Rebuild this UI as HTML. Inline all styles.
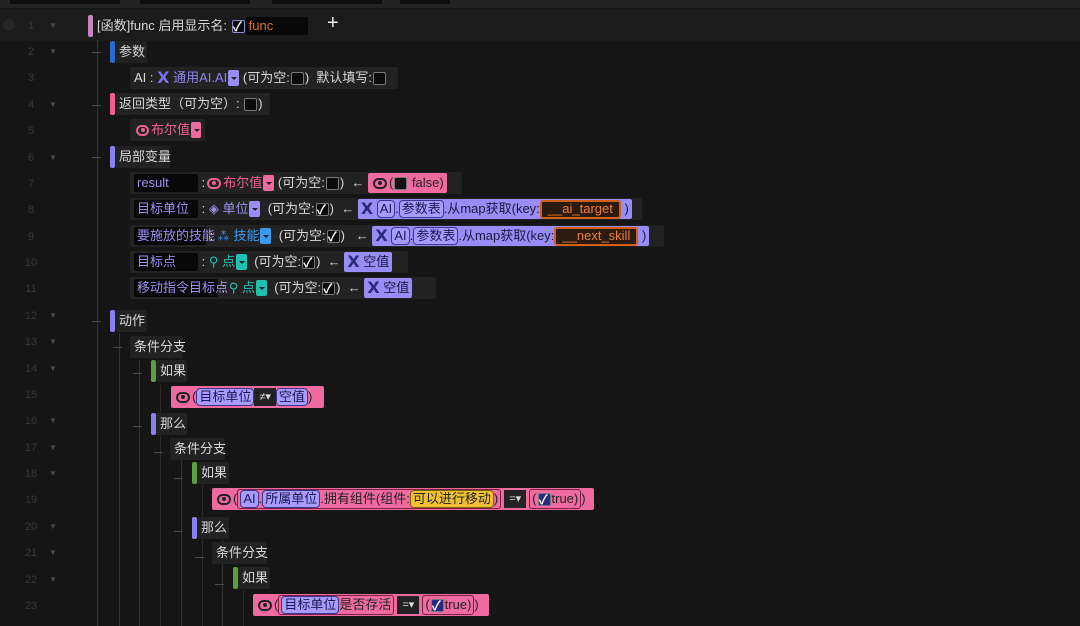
<!DOCTYPE html>
<html><head><meta charset="utf-8"><style>
*{margin:0;padding:0;box-sizing:border-box}
body{width:1080px;height:626px;background:#151515;overflow:hidden;position:relative;font-family:"Liberation Sans","Noto Sans CJK SC",sans-serif;font-size:13px;color:#d8d8d8}
.top{position:absolute;left:0;top:0;width:1080px;height:8px;background:#222}
.tab{position:absolute;top:0;height:4px;background:#0e0e0e}
.r1{position:absolute;left:0;top:9px;width:1080px;height:32px;background:#1b1b1b}
.ln{position:absolute;left:14px;width:34px;text-align:center;color:#363636;font-size:11px;line-height:14px}
.ar{position:absolute;left:49px;color:#4a4a4a;font-size:8px;line-height:14px}
.vl{position:absolute;width:1px;background:#333}
.hd{position:absolute;height:1px;width:9px;background:#4a4a4a}
.b{position:absolute;height:22px;line-height:22px;display:flex;align-items:center;background:#222;border-radius:2px;padding:0 4px;white-space:nowrap}
.bar{position:absolute;width:5px;height:22px;border-radius:2px}
.cb{display:inline-block;width:13px;height:13px;border:1.5px solid #777;background:#0b0b0b;border-radius:2px;margin:0 1px;position:relative;vertical-align:middle}
.cb.on::after{content:"✓";position:absolute;left:0;top:-5px;font-size:13px;color:#fff;font-weight:bold}
.inp{background:#080808;height:18px;display:inline-flex;align-items:center;padding:0 3px;border-radius:2px}
.pk{color:#f06090}
.dd{display:inline-block;width:11px;height:16px;border-radius:2px;position:relative;margin-left:1px}
.dd::after{content:"";position:absolute;left:3px;top:7px;border-left:3px solid transparent;border-right:3px solid transparent;border-top:3px solid #222}
.pkb{background:#ef6a9f;color:#222}
.pub{background:#9a8cf5;color:#1a1a40}
.pill{border:1.5px solid #3a3590;border-radius:4px;padding:0 2px;height:18px;display:inline-flex;align-items:center;background:#a79bff;color:#1a1a50}
.org{border:2px solid #d06018;background:#2a1a10;color:#f08030;border-radius:3px;padding:0 6px;height:19px;display:inline-flex;align-items:center}
.X{font-weight:bold;font-size:16px;color:#2a2a7a;font-family:"DejaVu Sans",sans-serif}
.eye{display:inline-block;width:14px;height:11px;border:2px solid #222;border-radius:6px;position:relative;margin:0 2px}
.eye::after{content:"";position:absolute;left:3px;top:1.5px;width:4px;height:4px;background:#222;border-radius:50%}
.eyep{border-color:#f06090}.eyep::after{background:#f06090}
.op{background:#222;color:#ddd;height:18px;display:inline-flex;align-items:center;padding:0 5px;font-size:11px}
</style></head><body>
<div class="top"></div>
<div class="tab" style="left:10px;width:110px"></div>
<div class="tab" style="left:140px;width:110px"></div>
<div class="tab" style="left:272px;width:110px"></div>
<div class="tab" style="left:400px;width:50px"></div>
<div class="r1"></div>
<div style="position:absolute;left:3px;top:19px;width:12px;height:12px;border-radius:50%;background:#262626"></div>

<div class="ln" style="top:19px">1</div><div class="ar" style="top:19px">▼</div>
<div class="ln" style="top:45px">2</div><div class="ar" style="top:45px">▼</div>
<div class="ln" style="top:71px">3</div>
<div class="ln" style="top:98px">4</div><div class="ar" style="top:98px">▼</div>
<div class="ln" style="top:124px">5</div>
<div class="ln" style="top:151px">6</div><div class="ar" style="top:151px">▼</div>
<div class="ln" style="top:177px">7</div>
<div class="ln" style="top:203px">8</div>
<div class="ln" style="top:230px">9</div>
<div class="ln" style="top:256px">10</div>
<div class="ln" style="top:282px">11</div>
<div class="ln" style="top:309px">12</div><div class="ar" style="top:309px">▼</div>
<div class="ln" style="top:335px">13</div><div class="ar" style="top:335px">▼</div>
<div class="ln" style="top:362px">14</div><div class="ar" style="top:362px">▼</div>
<div class="ln" style="top:388px">15</div>
<div class="ln" style="top:414px">16</div><div class="ar" style="top:414px">▼</div>
<div class="ln" style="top:441px">17</div><div class="ar" style="top:441px">▼</div>
<div class="ln" style="top:467px">18</div><div class="ar" style="top:467px">▼</div>
<div class="ln" style="top:493px">19</div>
<div class="ln" style="top:520px">20</div><div class="ar" style="top:520px">▼</div>
<div class="ln" style="top:546px">21</div><div class="ar" style="top:546px">▼</div>
<div class="ln" style="top:573px">22</div><div class="ar" style="top:573px">▼</div>
<div class="ln" style="top:599px">23</div>

<div class="vl" style="left:97px;top:40px;height:586px"></div>
<div class="vl" style="left:119px;top:333px;height:293px"></div>
<div class="vl" style="left:139px;top:360px;height:266px"></div>
<div class="vl" style="left:160px;top:385px;height:241px;background:#2a2a2a"></div>
<div class="vl" style="left:181px;top:457px;height:169px"></div>
<div class="vl" style="left:202px;top:485px;height:141px;background:#2a2a2a"></div>
<div class="vl" style="left:222px;top:540px;height:86px"></div>
<div class="vl" style="left:243px;top:590px;height:36px;background:#2a2a2a"></div>
<div class="hd" style="left:92px;top:52px"></div>
<div class="hd" style="left:92px;top:105px"></div>
<div class="hd" style="left:92px;top:157px"></div>
<div class="hd" style="left:92px;top:321px"></div>
<div class="hd" style="left:113px;top:347px"></div>
<div class="hd" style="left:133px;top:373px"></div>
<div class="hd" style="left:133px;top:426px"></div>
<div class="hd" style="left:154px;top:452px"></div>
<div class="hd" style="left:174px;top:478px"></div>
<div class="hd" style="left:174px;top:531px"></div>
<div class="hd" style="left:195px;top:557px"></div>
<div class="hd" style="left:215px;top:584px"></div>

<div class="bar" style="left:88px;top:15px;background:#c586c0"></div>
<div class="b" style="left:93px;top:15px;background:none">[函数]func 启用显示名:&nbsp;<span class="cb on" style="border-color:#8a8ad0"></span><span class="inp" style="width:62px;color:#e07020">func</span></div>
<div style="position:absolute;left:327px;top:12px;font-size:20px;color:#eee">+</div>

<div class="bar" style="left:110px;top:41px;background:#2a6ad0"></div>
<div class="b" style="left:115px;top:41px;width:32px">参数</div>
<div class="b" style="left:130px;top:67px;width:268px">AI :&nbsp;<span class="X" style="color:#7a70e8">X</span>&nbsp;<span style="color:#8e84f0">通用AI.AI</span><span class="dd pub"></span>&nbsp;(可为空:<span class="cb"></span>)&nbsp;&nbsp;默认填写:<span class="cb"></span></div>
<div class="bar" style="left:110px;top:93px;background:#f0608f"></div>
<div class="b" style="left:115px;top:93px;width:155px">返回类型（可为空）:&nbsp;<span class="cb"></span>)</div>
<div class="b" style="left:130px;top:119px;width:75px"><span class="eye eyep"></span><span class="pk">布尔值</span><span class="dd pkb"></span></div>
<div class="bar" style="left:110px;top:146px;background:#8a80f0"></div>
<div class="b" style="left:115px;top:146px;width:55px">局部变量</div>
<div class="b" style="left:130px;top:172px;width:332px"><span class="inp" style="width:64px;color:#9a90f0">result</span>&nbsp;:<span class="eye eyep"></span><span class="pk">布尔值</span><span class="dd pkb"></span>&nbsp;(可为空:<span class="cb"></span>)&nbsp;&nbsp;←&nbsp;<span style="background:#ef6a9f;height:20px;display:inline-flex;align-items:center;padding:0 3px;color:#222;border-radius:2px"><span class="eye"></span>(<span class="cb" style="background:#111"></span>&nbsp;false)</span></div>
<div class="b" style="left:130px;top:198px;width:512px"><span class="inp" style="width:64px;color:#9a90f0">目标单位</span>&nbsp;:&nbsp;<span style="color:#9a90f0">◈ 单位</span><span class="dd pub"></span>&nbsp;&nbsp;(可为空:<span class="cb on"></span>)&nbsp;&nbsp;←&nbsp;<span style="background:#9a8cf5;height:20px;display:inline-flex;align-items:center;padding:0 3px;color:#1a1a40;border-radius:2px"><span class="X">X</span>&nbsp;<span class="pill">AI</span>.<span class="pill">参数表</span>.从map获取(key:<span class="org">__ai_target</span>&nbsp;)</span></div>
<div class="b" style="left:130px;top:225px;width:534px"><span class="inp" style="width:72px;color:#9a90f0">要施放的技能</span>&nbsp;:&nbsp;<span style="color:#3a9af0">⁂ 技能</span><span class="dd" style="background:#3a9af0"></span>&nbsp;&nbsp;(可为空:<span class="cb on"></span>)&nbsp;&nbsp;&nbsp;←&nbsp;<span style="background:#9a8cf5;height:20px;display:inline-flex;align-items:center;padding:0 3px;color:#1a1a40;border-radius:2px"><span class="X">X</span>&nbsp;<span class="pill">AI</span>.<span class="pill">参数表</span>.从map获取(key:<span class="org">__next_skill</span>&nbsp;)</span></div>
<div class="b" style="left:130px;top:251px;width:278px"><span class="inp" style="width:64px;color:#9a90f0">目标点</span>&nbsp;:&nbsp;<span style="color:#20c0b0">⚲ 点</span><span class="dd" style="background:#20c0b0"></span>&nbsp;&nbsp;(可为空:<span class="cb on"></span>)&nbsp;&nbsp;←&nbsp;<span style="background:#9a8cf5;height:20px;display:inline-flex;align-items:center;padding:0 3px;color:#1a1a40;border-radius:2px"><span class="X">X</span>&nbsp;空值</span></div>
<div class="b" style="left:130px;top:277px;width:306px"><span class="inp" style="width:84px;color:#9a90f0">移动指令目标点</span>&nbsp;:&nbsp;<span style="color:#20c0b0">⚲ 点</span><span class="dd" style="background:#20c0b0"></span>&nbsp;&nbsp;(可为空:<span class="cb on"></span>)&nbsp;&nbsp;←&nbsp;<span style="background:#9a8cf5;height:20px;display:inline-flex;align-items:center;padding:0 3px;color:#1a1a40;border-radius:2px"><span class="X">X</span>&nbsp;空值</span></div>
<div class="bar" style="left:110px;top:310px;background:#8a80f0"></div>
<div class="b" style="left:115px;top:310px;width:32px">动作</div>
<div class="b" style="left:130px;top:336px;width:53px">条件分支</div>
<div class="bar" style="left:151px;top:360px;background:#5aa040"></div>
<div class="b" style="left:156px;top:360px;width:31px">如果</div>
<div class="b" style="left:171px;top:386px;width:153px;background:#ef6a9f;color:#222;padding:0 3px"><span class="eye"></span>(<span class="pill">目标单位</span><span class="op">≠▾</span><span class="pill">空值</span>)</div>
<div class="bar" style="left:151px;top:413px;background:#8a80f0"></div>
<div class="b" style="left:156px;top:413px;width:31px">那么</div>
<div class="b" style="left:170px;top:438px;width:55px">条件分支</div>
<div class="bar" style="left:192px;top:462px;background:#5aa040"></div>
<div class="b" style="left:197px;top:462px;width:32px">如果</div>
<div class="b" style="left:212px;top:488px;width:382px;background:#ef6a9f;color:#222;padding:0 3px"><span class="eye"></span>(<span style="border:1.5px solid #7a2040;border-radius:3px;height:20px;display:inline-flex;align-items:center;padding:0 2px"><span class="pill">AI</span>.<span class="pill">所属单位</span>.拥有组件(组件:<span class="pill" style="background:#f0c030;border-color:#806010;color:#222">可以进行移动</span>)</span><span class="op" style="margin:0 3px">=▾</span><span style="border:1.5px solid #7a2040;border-radius:3px;height:20px;display:inline-flex;align-items:center;padding:0 2px">(<span class="cb on" style="background:#2a2a80"></span>true)</span>)</div>
<div class="bar" style="left:192px;top:517px;background:#8a80f0"></div>
<div class="b" style="left:197px;top:517px;width:32px">那么</div>
<div class="b" style="left:212px;top:542px;width:55px">条件分支</div>
<div class="bar" style="left:233px;top:567px;background:#5aa040"></div>
<div class="b" style="left:238px;top:567px;width:32px">如果</div>
<div class="b" style="left:253px;top:594px;width:236px;background:#ef6a9f;color:#222;padding:0 3px"><span class="eye"></span>(<span style="border:1.5px solid #7a2040;border-radius:3px;height:20px;display:inline-flex;align-items:center;padding:0 2px"><span class="pill">目标单位</span>是否存活</span><span class="op" style="margin:0 3px">=▾</span><span style="border:1.5px solid #7a2040;border-radius:3px;height:20px;display:inline-flex;align-items:center;padding:0 2px">(<span class="cb on" style="background:#2a2a80"></span>true)</span>)</div>
</body></html>
